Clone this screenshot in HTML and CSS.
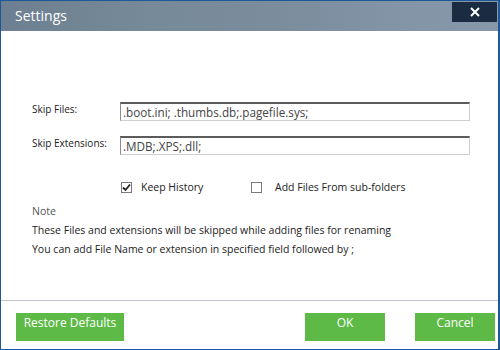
FILE: index.html
```html
<!DOCTYPE html>
<html lang="en">
<head>
    <meta charset="UTF-8">
    <title>Settings</title>
    <link rel="stylesheet" href="styles.css">
</head>
<body>
    <div class="dialog">
        <div class="titlebar">
            <span class="title">Settings</span>
            <button class="close">
                <svg width="10" height="10" viewBox="0 0 10 10"><path d="M1 1L9 9M9 1L1 9" stroke="#fff" stroke-width="2"/></svg>
            </button>
        </div>

        <div class="content">
            <div class="form">
                <label for="skip-files">Skip Files:</label>
                <input type="text" id="skip-files" value=".boot.ini; .thumbs.db;.pagefile.sys;">

                <label for="skip-ext">Skip Extensions:</label>
                <input type="text" id="skip-ext" value=".MDB;.XPS;.dll;">
            </div>

            <div class="options">
                <div class="option option-first">
                    <span class="box">
                        <svg width="9" height="9" viewBox="0 0 9 9"><path d="M1 4.5L3.5 7L8 1.5" fill="none" stroke="#222" stroke-width="1.8"/></svg>
                    </span>
                    Keep History
                </div>
                <div class="option">
                    <span class="box"></span>
                    Add Files From sub-folders
                </div>
            </div>

            <div class="note">
                <p class="note-title">Note</p>
                <p>These Files and extensions will be skipped while adding files for renaming</p>
                <p>You can add File Name or extension in specified field followed by ;</p>
            </div>
        </div>

        <div class="footer">
            <button class="btn btn-wide">Restore Defaults</button>
            <div class="spacer"></div>
            <button class="btn">OK</button>
            <button class="btn">Cancel</button>
        </div>
    </div>
</body>
</html>
```

FILE: styles.css
```css
body{
    margin: 0;
    font-family: "Open Sans", "Noto Sans", sans-serif;
    background: #fff;
}

.dialog{
    width: 500px;
    height: 350px;
    box-sizing: border-box;
    border: 1px solid #1c5796;
    border-right-width: 2px;
    display: flex;
    flex-direction: column;
    background: #fff;
}

.titlebar{
    height: 30px;
    display: flex;
    align-items: flex-start;
    justify-content: space-between;
    background: linear-gradient(90deg, #6d7f90 0%, #768a99 30%, #7b8c9d 55%, #8294a6 80%, #8898ab 100%);
}

.title{
    color: #fff;
    font-size: 14px;
    line-height: 30px;
    padding-left: 14px;
}

.close{
    width: 45px;
    height: 20px;
    margin: 1px 1px 0 0;
    border: none;
    padding: 0;
    background: #1b2c42;
    display: flex;
    align-items: center;
    justify-content: center;
}

.content{
    flex: 1;
    padding-left: 31px;
    font-size: 10.5px;
    color: #222;
}

.form{
    display: grid;
    grid-template-columns: 88px 350px;
    row-gap: 15px;
    margin-top: 71px;
}

.form label{
    font-size: 10px;
    line-height: 14px;
}

.form input{
    height: 19px;
    box-sizing: border-box;
    border: 1px solid #cfcfcf;
    border-top: 2px solid #5c5c5c;
    border-left-color: #8c8c8c;
    padding: 0 2px;
    font-family: inherit;
    font-size: 11.7px;
    color: #444;
    outline: none;
}

.options{
    display: flex;
    margin-top: 26px;
    margin-left: 89px;
    font-size: 10.5px;
}

.option{
    display: flex;
    align-items: center;
    gap: 9px;
    line-height: 13px;
}

.option-first{
    width: 130px;
}

.option .box{
    width: 11px;
    height: 11px;
    box-sizing: border-box;
    border: 1px solid #7a7a7a;
    display: flex;
    align-items: center;
    justify-content: center;
}

.option:last-child{
    gap: 13px;
}

.note{
    margin-top: 8px;
}

.note p{
    margin: 0;
    line-height: 19px;
}

.note-title{
    color: #555;
}

.footer{
    border-top: 1px solid #c4c4cc;
    height: 49px;
    box-sizing: border-box;
    display: flex;
    align-items: flex-start;
    padding: 12px 3px 0 15px;
    gap: 30px;
}

.spacer{
    flex: 1;
}

.btn{
    width: 80px;
    height: 28px;
    border: none;
    background: #5dba47;
    color: #fff;
    font-family: inherit;
    font-size: 12px;
    padding: 0 0 10px;
}

.btn-wide{
    width: 108px;
}
```
